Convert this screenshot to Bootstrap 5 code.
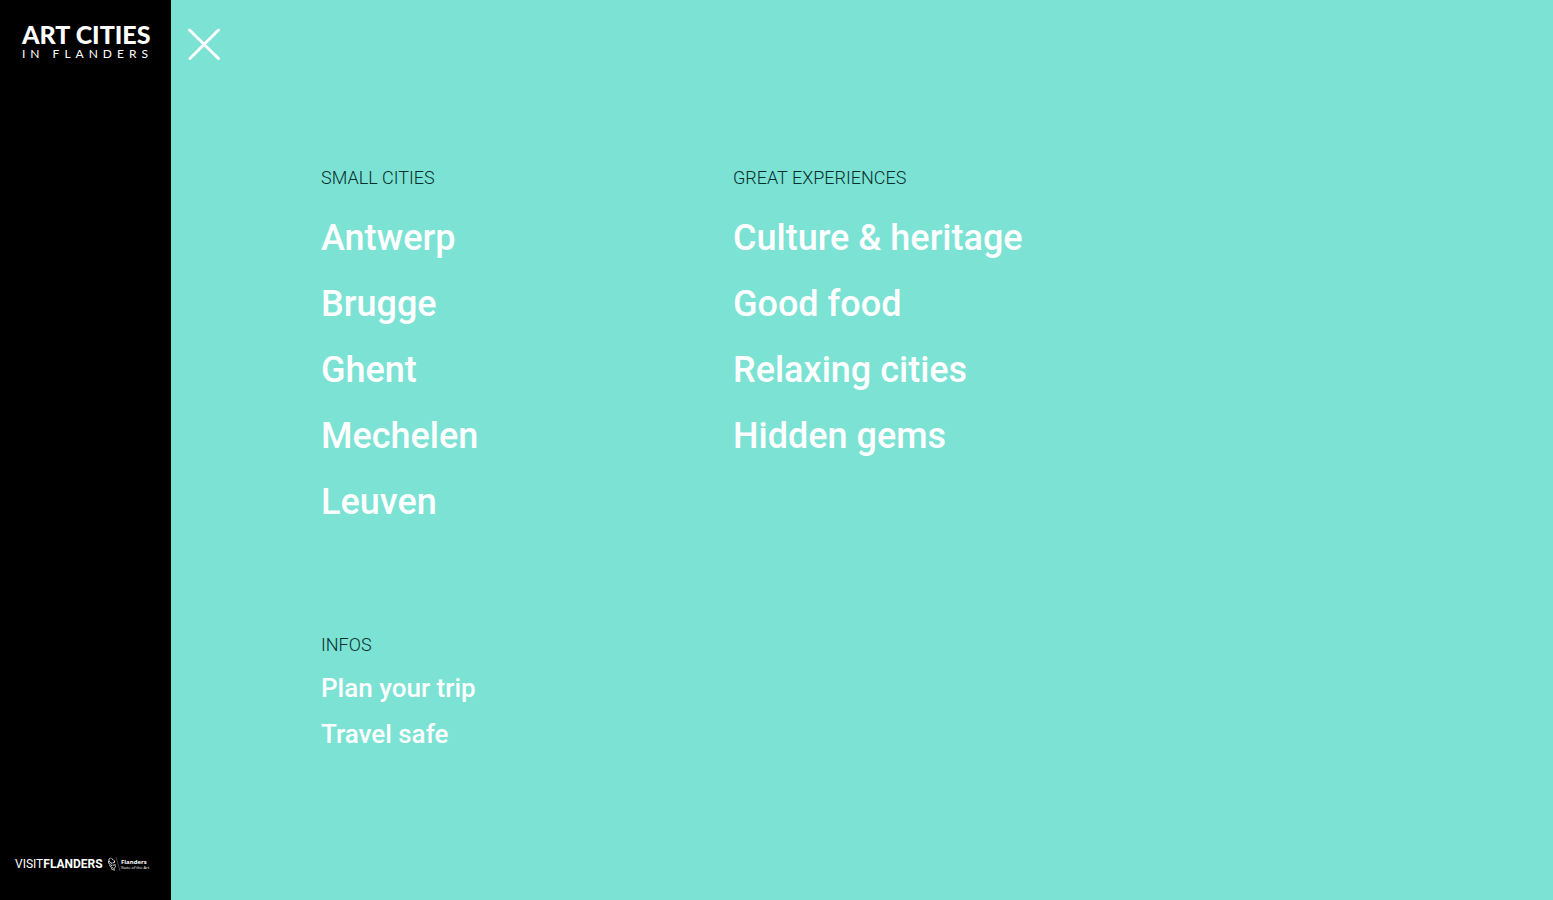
<!DOCTYPE html>
<html lang="en">
<head>
<meta charset="utf-8">
<meta name="viewport" content="width=device-width, initial-scale=1">
<title>Art Cities in Flanders</title>
<link href="https://cdn.jsdelivr.net/npm/bootstrap@5.3.0/dist/css/bootstrap.min.css" rel="stylesheet">
<style>
  body { font-family: Roboto, "Liberation Sans", sans-serif; background: #7ce2d4; }
  a { color: #fff; text-decoration: none; }
  a:hover { text-decoration: underline; }
  .sidebar { width: 171px; background: #000; padding: 22px 15px 26px; }
  .brand { font-family: Lato, sans-serif; padding-left: 7px; white-space: nowrap; }
  .brand-top { font-size: 25px; line-height: 25px; font-weight: 900; }
  .brand-sub { font-size: 12px; line-height: 14px; font-weight: 400; letter-spacing: 5px; }
  .partner { font-size: 12px; line-height: 20px; white-space: nowrap; }
  .partner-name { width: 87px; font-weight: 400; }
  .partner-name strong { font-weight: 700; }
  .partner-mark { width: 14px; height: 16px; margin: 0 0 0 5px; }
  .tagline { font-family: "Open Sans", sans-serif; font-size: 6px; line-height: 6px; font-weight: 700; }
  .tagline small { font-size: 4px; line-height: 5px; font-weight: 400; }
  .close-menu { margin: 26px 0 0 15px; width: 36px; height: 36px; }
  .menu { padding: 104px 20px 32px 150px; }
  .menu h2 { font-size: 18px; line-height: 24px; font-weight: 300; color: #06302e; margin-bottom: 27px; }
  .menu ul { font-size: 36px; line-height: 42px; font-weight: 500; gap: 24px; }
  .infos { margin-top: 110px; }
  .infos h2 { margin-bottom: 16px; }
  .infos ul { font-size: 26px; line-height: 30px; gap: 16px; }
</style>
</head>
<body>
<div class="d-flex min-vh-100">
  <aside class="sidebar flex-shrink-0 d-flex flex-column justify-content-between">
    <a href="#" class="brand d-flex flex-column">
      <span class="brand-top">ART CITIES</span>
      <span class="brand-sub">IN FLANDERS</span>
    </a>
    <a href="#" class="partner d-flex align-items-center">
      <span class="partner-name">VISIT<strong>FLANDERS</strong></span>
      <svg class="partner-mark flex-shrink-0" viewBox="0 0 14 16" fill="none" stroke="#fff" aria-hidden="true">
        <path stroke-width=".9" d="M3.500 2C1 3 1.500 6 5 7.500M1.500 5c0 3 1.500 4 3.500 4.500M4.500 2.500l2 1.500M7.500 4.500v2l-2 .5M8.500 8c-.5 1-1.500 1.500-3 1M2.500 9.500c1 2 3 1.500 4 3M8.500 9.500c.5 1.500-1 1.500-1 3M4 12.500c1 .5 2 1.500 4 1.500"/>
        <path stroke-width=".5" stroke="#888" d="M9 1l4 14"/>
      </svg>
      <span class="tagline d-flex flex-column"><span>Flanders</span><small>State of the Art</small></span>
    </a>
  </aside>

  <main class="flex-grow-1">
    <button type="button" class="close-menu btn p-0 border-0 d-block" aria-label="Close menu">
      <svg class="d-block" width="36" height="36" viewBox="0 0 36 36" stroke="#fff" stroke-width="3" stroke-linecap="round" aria-hidden="true"><path d="M3.500 4 32.500 32.500M32.500 4 4 32.500"/></svg>
    </button>
    <nav class="menu" aria-label="Main menu">
      <div class="row">
        <section class="col-12 col-md-6 col-xl-4">
          <h2>SMALL CITIES</h2>
          <ul class="list-unstyled d-flex flex-column mb-0">
            <li><a href="#">Antwerp</a></li>
            <li><a href="#">Brugge</a></li>
            <li><a href="#">Ghent</a></li>
            <li><a href="#">Mechelen</a></li>
            <li><a href="#">Leuven</a></li>
          </ul>
        </section>
        <section class="col-12 col-md-6 col-xl-4">
          <h2>GREAT EXPERIENCES</h2>
          <ul class="list-unstyled d-flex flex-column mb-0">
            <li><a href="#">Culture &amp; heritage</a></li>
            <li><a href="#">Good food</a></li>
            <li><a href="#">Relaxing cities</a></li>
            <li><a href="#">Hidden gems</a></li>
          </ul>
        </section>
      </div>
      <section class="infos">
        <h2>INFOS</h2>
        <ul class="list-unstyled d-flex flex-column mb-0">
          <li><a href="#">Plan your trip</a></li>
          <li><a href="#">Travel safe</a></li>
        </ul>
      </section>
    </nav>
  </main>
</div>
<script src="https://cdn.jsdelivr.net/npm/bootstrap@5.3.0/dist/js/bootstrap.bundle.min.js"></script>
</body>
</html>
